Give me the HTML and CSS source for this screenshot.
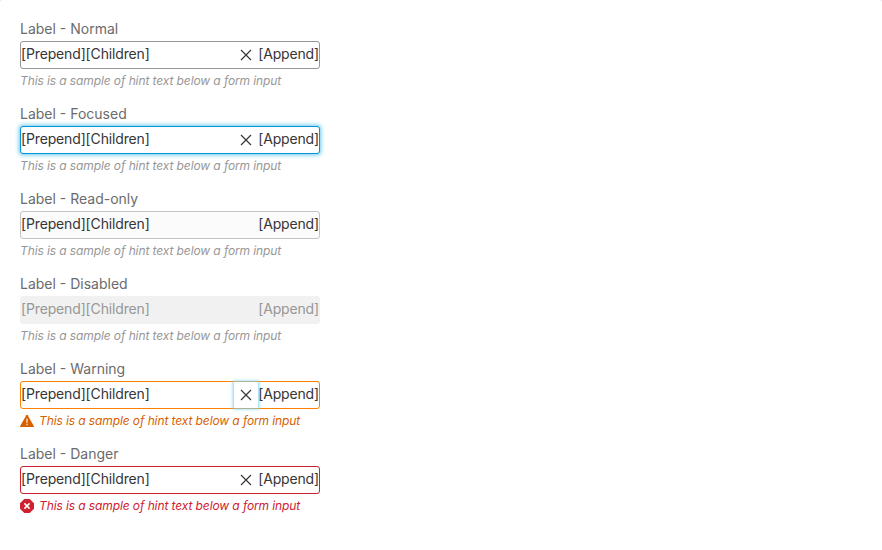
FILE: index.html
```html
<!DOCTYPE html>
<html lang="en">
<head>
<meta charset="utf-8">
<title>Form inputs</title>
<link rel="stylesheet" href="styles.css">
</head>
<body>
<main class="panel">
  <div class="field">
    <div class="label">Label - Normal</div>
    <div class="input"><span>[Prepend]</span><span class="children">[Children]</span><button class="clear" aria-label="Clear"><svg viewBox="0 0 12 12"><path d="M1 1l10 10M11 1L1 11"/></svg></button><span>[Append]</span></div>
    <div class="hint"><span>This is a sample of hint text below a form input</span></div>
  </div>
  <div class="field">
    <div class="label">Label - Focused</div>
    <div class="input focused"><span>[Prepend]</span><span class="children">[Children]</span><button class="clear" aria-label="Clear"><svg viewBox="0 0 12 12"><path d="M1 1l10 10M11 1L1 11"/></svg></button><span>[Append]</span></div>
    <div class="hint"><span>This is a sample of hint text below a form input</span></div>
  </div>
  <div class="field">
    <div class="label">Label - Read-only</div>
    <div class="input readonly"><span>[Prepend]</span><span class="children">[Children]</span><span>[Append]</span></div>
    <div class="hint"><span>This is a sample of hint text below a form input</span></div>
  </div>
  <div class="field">
    <div class="label">Label - Disabled</div>
    <div class="input disabled"><span>[Prepend]</span><span class="children">[Children]</span><span>[Append]</span></div>
    <div class="hint"><span>This is a sample of hint text below a form input</span></div>
  </div>
  <div class="field">
    <div class="label">Label - Warning</div>
    <div class="input warning"><span>[Prepend]</span><span class="children">[Children]</span><button class="clear active" aria-label="Clear"><svg viewBox="0 0 12 12"><path d="M1 1l10 10M11 1L1 11"/></svg></button><span>[Append]</span></div>
    <div class="hint hint-warning"><svg viewBox="0 0 14 14"><path fill="currentColor" d="M6.3 1.2Q7 .2 7.7 1.2L13.8 12Q14.2 13 13.2 13H.8Q-.2 13 .2 12Z"/><path fill="#fff" fill-opacity=".7" d="M6.2 4.5h1.6v4.2H6.2zM6.2 9.8h1.6v1.5H6.2z"/></svg><span>This is a sample of hint text below a form input</span></div>
  </div>
  <div class="field">
    <div class="label">Label - Danger</div>
    <div class="input danger"><span>[Prepend]</span><span class="children">[Children]</span><button class="clear" aria-label="Clear"><svg viewBox="0 0 12 12"><path d="M1 1l10 10M11 1L1 11"/></svg></button><span>[Append]</span></div>
    <div class="hint hint-danger"><svg viewBox="0 0 14 14"><path fill="currentColor" d="M4.3 0h5.4L14 4.3v5.4L9.7 14H4.3L0 9.7V4.3z"/><path stroke="#fff" stroke-width="1.5" d="M4.4 4.4l5.2 5.2M9.6 4.4L4.4 9.6"/></svg><span>This is a sample of hint text below a form input</span></div>
  </div>
</main>
</body>
</html>
```
FILE: styles.css
```css
* { box-sizing: border-box; }
body {
  margin: 0;
  background: #e8e8f0;
  font-family: Inter, "Liberation Sans", sans-serif;
  font-size: 14px;
  line-height: 20px;
}
.panel {
  height: 550px;
  padding: 19px 20px;
  border-radius: 3px 3px 0 0;
  background: #fff;
}
.field { width: 300px; height: 85px; }
.label { height: 22px; color: #6b6b6c; }
.input {
  display: flex;
  align-items: center;
  height: 28px;
  border: 1px solid #979699;
  border-radius: 3px;
  background: #fff;
  color: #363537;
  letter-spacing: -0.15px;
}
.input > span { line-height: 24px; padding-bottom: 2px; }
.children { flex: 1; }
.clear {
  display: flex;
  align-items: center;
  justify-content: center;
  width: 24px;
  height: 26px;
  padding: 0;
  border: 0;
  background: none;
  color: #363537;
}
.clear svg { width: 12px; height: 12px; fill: none; stroke: currentColor; stroke-width: 1.2; }
.clear.active { background: #fff; box-shadow: 0 0 3px 1px #7bd3f2; }
.focused { border-color: #0595d6; box-shadow: 0 0 4px 1px #65c9ef; }
.readonly { border-color: #c4c3c6; background: #fbfbfb; }
.disabled { border-color: #f1f1f1; background: #f1f1f1; color: #979797; }
.warning { border-color: #ff7f00; }
.danger { border-color: #cf2030; }
.hint {
  display: flex;
  align-items: center;
  gap: 5px;
  height: 24px;
  color: #979797;
  font-size: 12px;
  font-style: italic;
  letter-spacing: -0.1px;
}
.hint svg { width: 14px; height: 14px; }
.hint-warning { color: #d75f00; }
.hint-danger { color: #cf2030; }
```
